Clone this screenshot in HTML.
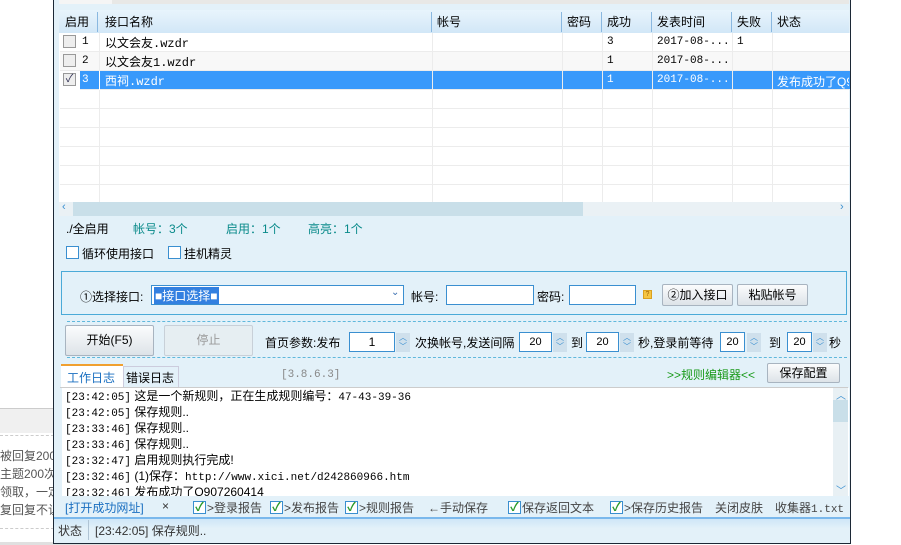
<!DOCTYPE html>
<html><head><meta charset="utf-8"><style>
*{margin:0;padding:0;box-sizing:border-box}
body{width:901px;height:545px;background:#fff;position:relative;overflow:hidden;font-family:"Liberation Sans","Noto Sans CJK SC",sans-serif;font-size:12px;color:#000}
.a{position:absolute;white-space:nowrap}
.mono{font-family:"Liberation Mono","Noto Sans CJK SC",monospace;font-size:11px}
.cb{position:absolute;width:13px;height:13px;border:1px solid #3a8fd0;background:#fff}
.ck{position:absolute;width:13px;height:13px;border:1px solid #3a8fd0;background:#fff;color:#2a9a2a;font-size:12px;line-height:11px;text-align:center;font-weight:bold}
.btn{position:absolute;border:1px solid #a8b4c0;border-radius:2px;background:linear-gradient(#fbfcfd,#dde3e8);text-align:center}
.inp{position:absolute;border:1px solid #3a8fd0;background:#fff;text-align:center}
.spin{position:absolute;width:14px;height:19px;background:#cfe0ec;color:#3a8fd0;font-size:8px;line-height:9px;text-align:center}
.row{position:absolute;left:60px;width:790px;height:19px;border-bottom:1px solid #ececec}
.vl{position:absolute;top:33px;height:169px;width:1px;background:#ececec}
.hd{position:absolute;top:12px;height:20px;width:1px;background:#8ab8e0}
.lg{position:absolute;left:65px;font-size:12px;line-height:14px;white-space:nowrap}
.lg .mono{font-size:11px}
</style></head><body>
<div class="a" style="left:0;top:408px;width:54px;height:1px;background:#ccc"></div>
<div class="a" style="left:0;top:409px;width:54px;height:24px;background:#f0f0f0"></div>
<div class="a" style="left:0;top:435px;width:54px;border-top:1px dashed #ccc"></div>
<div class="a" style="left:0;top:447px;color:#555;line-height:18px;font-size:12px">被回复200<br>主题200次<br>领取，一定<br>复回复不让</div>
<div class="a" style="left:0;top:528px;width:54px;border-top:1px dashed #ccc"></div>
<div class="a" style="left:0;top:542px;width:170px;height:3px;background:#e0e0e0"></div>
<div class="a" style="left:53px;top:0;width:798px;height:544px;background:#e3f1f9;border-left:1px solid #1c2836;border-right:1px solid #1c2836;border-bottom:1px solid #1c2836"></div>
<div class="a" style="left:59px;top:0;width:790px;height:4px;background:#e8e8e6"></div>
<div class="a" style="left:59px;top:0;width:53px;height:4px;background:#f5f5f5"></div>
<div class="a" style="left:59px;top:10px;width:790px;height:23px;background:linear-gradient(#e8f4fc,#d2e7f7)"></div>
<div class="a" style="left:65px;top:13px">启用</div>
<div class="hd" style="left:97px"></div>
<div class="a" style="left:105px;top:13px">接口名称</div>
<div class="hd" style="left:431px"></div>
<div class="a" style="left:437px;top:13px">帐号</div>
<div class="hd" style="left:561px"></div>
<div class="a" style="left:567px;top:13px">密码</div>
<div class="hd" style="left:601px"></div>
<div class="a" style="left:607px;top:13px">成功</div>
<div class="hd" style="left:651px"></div>
<div class="a" style="left:657px;top:13px">发表时间</div>
<div class="hd" style="left:731px"></div>
<div class="a" style="left:737px;top:13px">失败</div>
<div class="hd" style="left:771px"></div>
<div class="a" style="left:777px;top:13px">状态</div>
<div class="a" style="left:59px;top:33px;width:790px;height:169px;background:#fff"></div>
<div class="row" style="top:33px;background:#fff"></div>
<div class="row" style="top:52px;background:#f8f8f8"></div>
<div class="row" style="top:71px;background:#3899fb;left:80px;width:770px"></div>
<div class="row" style="top:90px"></div><div class="row" style="top:109px"></div><div class="row" style="top:128px"></div><div class="row" style="top:147px"></div><div class="row" style="top:166px"></div><div class="row" style="top:185px;border:0"></div>
<div class="vl" style="left:99px"></div><div class="vl" style="left:432px"></div><div class="vl" style="left:562px"></div><div class="vl" style="left:602px"></div><div class="vl" style="left:652px"></div><div class="vl" style="left:732px"></div><div class="vl" style="left:772px"></div>
<div class="a" style="left:99px;top:71px;width:1px;height:19px;background:#fff"></div>
<div class="cb" style="left:63px;top:35px;border-color:#999;background:#eee"></div>
<div class="cb" style="left:63px;top:54px;border-color:#999;background:#eee"></div>
<div class="cb" style="left:63px;top:73px;border-color:#999;background:#eee;color:#335;font-size:11px;line-height:11px;text-align:center">✓</div>
<div class="a mono" style="left:82px;top:36px">1</div><div class="a mono" style="left:82px;top:55px">2</div><div class="a mono" style="left:82px;top:74px;color:#fff">3</div>
<div class="a mono" style="left:105px;top:34px;font-size:12px">以文会友.wzdr</div>
<div class="a mono" style="left:105px;top:53px;font-size:12px">以文会友1.wzdr</div>
<div class="a mono" style="left:105px;top:72px;font-size:12px;color:#fff">西祠.wzdr</div>
<div class="a mono" style="left:607px;top:36px">3</div><div class="a mono" style="left:607px;top:55px">1</div><div class="a mono" style="left:607px;top:74px;color:#fff">1</div>
<div class="a mono" style="left:657px;top:36px">2017-08-...</div><div class="a mono" style="left:657px;top:55px">2017-08-...</div><div class="a mono" style="left:657px;top:74px;color:#fff">2017-08-...</div>
<div class="a mono" style="left:737px;top:36px">1</div>
<div class="a" style="left:777px;top:73px;color:#fff;width:72px;overflow:hidden">发布成功了Q9</div>
<div class="a" style="left:59px;top:202px;width:790px;height:14px;background:#eaf1f5"></div>
<div class="a" style="left:73px;top:202px;width:510px;height:14px;background:#c9dfe9"></div>
<div class="a" style="left:62px;top:201px;color:#3a8fd0;font-size:11px">‹</div>
<div class="a" style="left:840px;top:201px;color:#3a8fd0;font-size:11px">›</div>
<div class="a" style="left:66px;top:220px">./全启用</div>
<div class="a" style="left:133px;top:220px;color:#098a8a">帐号：3个</div>
<div class="a" style="left:226px;top:220px;color:#098a8a">启用：1个</div>
<div class="a" style="left:308px;top:220px;color:#098a8a">高亮：1个</div>
<div class="cb" style="left:66px;top:246px"></div><div class="a" style="left:82px;top:245px">循环使用接口</div>
<div class="cb" style="left:168px;top:246px"></div><div class="a" style="left:184px;top:245px">挂机精灵</div>
<div class="a" style="left:61px;top:271px;width:786px;height:44px;border:1px solid #4aaad8"></div>
<div class="a" style="left:80px;top:288px">①选择接口:</div>
<div class="a" style="left:151px;top:285px;width:253px;height:20px;border:1px solid #3a8fd0;background:#fff"></div>
<div class="a" style="left:154px;top:287px;background:#3380e0;color:#fff;padding:0 1px">■接口选择■</div>
<div class="a" style="left:391px;top:287px;color:#3a6fb0;font-size:10px">⌄</div>
<div class="a" style="left:411px;top:288px">帐号:</div>
<div class="inp" style="left:446px;top:285px;width:88px;height:20px"></div>
<div class="a" style="left:537px;top:288px">密码:</div>
<div class="inp" style="left:569px;top:285px;width:67px;height:20px"></div>
<div class="a" style="left:643px;top:290px;width:9px;height:9px;background:#f5c542;border:1px solid #d9a020;font-size:7px;line-height:7px;text-align:center;color:#a06000">?</div>
<div class="btn" style="left:662px;top:284px;width:71px;height:22px;line-height:20px">②加入接口</div>
<div class="btn" style="left:737px;top:284px;width:71px;height:22px;line-height:20px">粘贴帐号</div>
<div class="a" style="left:67px;top:321px;width:780px;border-top:1px dashed #60b8dc"></div>
<div class="a" style="left:67px;top:357px;width:780px;border-top:1px dashed #60b8dc"></div>
<div class="btn" style="left:65px;top:325px;width:89px;height:31px;line-height:29px">开始(F5)</div>
<div class="btn" style="left:164px;top:325px;width:89px;height:31px;line-height:29px;color:#999;border-color:#c8d0d8;background:#e6eef2">停止</div>
<div class="a" style="left:265px;top:334px">首页参数:发布</div>
<div class="inp" style="left:349px;top:332px;width:46px;height:20px;line-height:18px">1</div>
<div class="spin" style="left:396px;top:333px">︿<br>﹀</div>
<div class="a" style="left:415px;top:334px">次换帐号,发送间隔</div>
<div class="inp" style="left:519px;top:332px;width:33px;height:20px;line-height:18px;font-size:11px">20</div>
<div class="spin" style="left:553px;top:333px">︿<br>﹀</div>
<div class="a" style="left:571px;top:334px">到</div>
<div class="inp" style="left:586px;top:332px;width:33px;height:20px;line-height:18px;font-size:11px">20</div>
<div class="spin" style="left:620px;top:333px">︿<br>﹀</div>
<div class="a" style="left:638px;top:334px">秒,登录前等待</div>
<div class="inp" style="left:720px;top:332px;width:25px;height:20px;line-height:18px;font-size:11px">20</div>
<div class="spin" style="left:747px;top:333px">︿<br>﹀</div>
<div class="a" style="left:769px;top:334px">到</div>
<div class="inp" style="left:787px;top:332px;width:25px;height:20px;line-height:18px;font-size:11px">20</div>
<div class="spin" style="left:813px;top:333px">︿<br>﹀</div>
<div class="a" style="left:829px;top:334px">秒</div>
<div class="a" style="left:61px;top:364px;width:62px;height:24px;background:#fff;border-top:2px solid #f0a030;color:#1a6fc0;padding:3px 0 0 6px;font-size:12px">工作日志</div>
<div class="a" style="left:123px;top:366px;width:56px;height:22px;border:1px solid #ccd;border-bottom:0;padding:2px 0 0 2px">错误日志</div>
<div class="a mono" style="left:281px;top:369px;color:#888">[3.8.6.3]</div>
<div class="a" style="left:667px;top:366px;color:#1a9a1a">&gt;&gt;规则编辑器&lt;&lt;</div>
<div class="btn" style="left:767px;top:363px;width:73px;height:20px;line-height:18px">保存配置</div>
<div class="a" style="left:60px;top:387px;width:788px;height:1px;background:#ccc"></div>
<div class="a" style="left:62px;top:388px;width:787px;height:108px;background:#fff;overflow:hidden"></div>
<div class="a" style="left:833px;top:388px;width:15px;height:108px;background:#e8f0f4"></div>
<div class="a" style="left:833px;top:400px;width:15px;height:22px;background:#c9dfe9"></div>
<div class="a" style="left:836px;top:387px;color:#3a8fd0;font-size:10px">︿</div>
<div class="a" style="left:836px;top:482px;color:#3a8fd0;font-size:10px">﹀</div>
<div class="lg" style="top:389px"><span class="mono">[23:42:05]</span> 这是一个新规则，正在生成规则编号：<span class="mono">47-43-39-36</span></div>
<div class="lg" style="top:405px"><span class="mono">[23:42:05]</span> 保存规则..</div>
<div class="lg" style="top:421px"><span class="mono">[23:33:46]</span> 保存规则..</div>
<div class="lg" style="top:437px"><span class="mono">[23:33:46]</span> 保存规则..</div>
<div class="lg" style="top:453px"><span class="mono">[23:32:47]</span> 启用规则执行完成!</div>
<div class="lg" style="top:469px"><span class="mono">[23:32:46]</span> (1)保存：<span class="mono">http://www.xici.net/d242860966.htm</span></div>
<div class="lg" style="top:485px;height:11px;overflow:hidden;line-height:14px"><span class="mono">[23:32:46]</span> 发布成功了Q907260414</div>
<div class="a" style="left:60px;top:496px;width:788px;height:21px;background:#e3f1f9"></div>
<div class="a" style="left:65px;top:499px;color:#1a6fc0">[打开成功网址]</div>
<div class="a" style="left:162px;top:499px;color:#333">×</div>
<div class="ck" style="left:193px;top:501px">✓</div><div class="a" style="left:207px;top:499px;color:#444">&gt;登录报告</div>
<div class="ck" style="left:270px;top:501px">✓</div><div class="a" style="left:284px;top:499px;color:#444">&gt;发布报告</div>
<div class="ck" style="left:345px;top:501px">✓</div><div class="a" style="left:359px;top:499px;color:#444">&gt;规则报告</div>
<div class="a" style="left:428px;top:499px;color:#444">←手动保存</div>
<div class="ck" style="left:508px;top:501px">✓</div><div class="a" style="left:522px;top:499px;color:#444">保存返回文本</div>
<div class="ck" style="left:610px;top:501px">✓</div><div class="a" style="left:624px;top:499px;color:#444">&gt;保存历史报告</div>
<div class="a" style="left:715px;top:499px;color:#444">关闭皮肤</div>
<div class="a" style="left:775px;top:499px;color:#444">收集器<span class="mono">1.txt</span></div>
<div class="a" style="left:54px;top:517px;width:796px;height:2px;background:#7ab8ec"></div>
<div class="a" style="left:54px;top:519px;width:796px;height:24px;background:linear-gradient(#cfe6f8,#e3f1f9 40%)"></div>
<div class="a" style="left:58px;top:522px;color:#333">状态</div>
<div class="a" style="left:88px;top:520px;width:1px;height:20px;background:#b0c4d4"></div>
<div class="a" style="left:95px;top:522px;color:#333">[23:42:05] 保存规则..</div>
</body></html>
